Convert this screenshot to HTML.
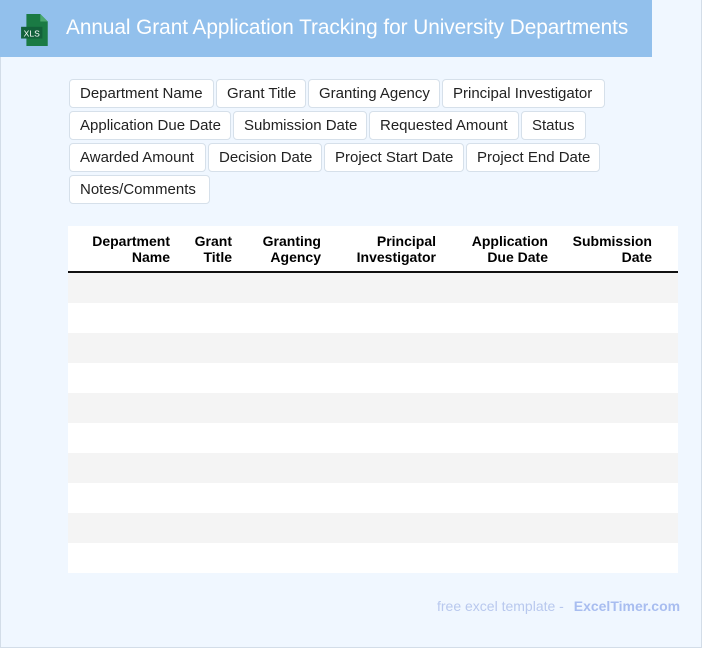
<!DOCTYPE html>
<html><head><style>
*{margin:0;padding:0;box-sizing:border-box}
body{width:702px;height:648px;background:#f0f7ff;font-family:"Liberation Sans",sans-serif;position:relative;overflow:hidden}
.frame{position:absolute;left:0;top:0;width:702px;height:648px;border:1px solid #d3dde8;border-top:none}
.hdr{position:absolute;left:0;top:0;width:652px;height:57px;background:#92c0ec}
.hdr h1{position:absolute;left:66px;top:16px;font-size:20.8px;letter-spacing:-0.05px;font-weight:normal;color:#fff;white-space:nowrap}
.tag{position:absolute;height:29px;background:#fff;border:1px solid #d6e0ea;border-radius:4px;font-size:15px;line-height:28px;padding-left:10px;color:#222;white-space:nowrap}
.tbl{position:absolute;left:68px;top:226px;width:610px;height:347px;background:#fff}
.th{position:absolute;top:7px;font-size:14px;font-weight:bold;text-align:right;line-height:16px;color:#000;white-space:nowrap}
.line{position:absolute;left:0;top:45px;width:610px;height:2px;background:#111}
.row{position:absolute;left:0;width:610px;height:30px;background:#f4f4f4}
.ft{position:absolute;top:598px;left:437px;font-size:14px;color:#b8c8ee;white-space:nowrap}
.ft b{color:#a8bdf0;margin-left:6px}
</style></head><body>
<div class="frame"></div>
<div class="hdr">
<svg style="position:absolute;left:20px;top:14px" width="32" height="32" viewBox="0 0 30 30">
<path d="M6 0h13l7 7v23H6z" fill="#1a7a44"/><path d="M19 0v7h7z" fill="#4aa86e"/>
<rect x="1" y="12" width="20" height="11" fill="#12613a"/>
<text x="11" y="21" font-size="8" fill="#fff" text-anchor="middle" font-family="Liberation Sans">XLS</text></svg>
<h1>Annual Grant Application Tracking for University Departments</h1></div>

<div class="tag" style="left:69px;top:79px;width:145px">Department Name</div>
<div class="tag" style="left:216px;top:79px;width:90px">Grant Title</div>
<div class="tag" style="left:308px;top:79px;width:132px">Granting Agency</div>
<div class="tag" style="left:442px;top:79px;width:163px">Principal Investigator</div>
<div class="tag" style="left:69px;top:111px;width:162px">Application Due Date</div>
<div class="tag" style="left:233px;top:111px;width:134px">Submission Date</div>
<div class="tag" style="left:369px;top:111px;width:150px">Requested Amount</div>
<div class="tag" style="left:521px;top:111px;width:65px">Status</div>
<div class="tag" style="left:69px;top:143px;width:137px">Awarded Amount</div>
<div class="tag" style="left:208px;top:143px;width:114px">Decision Date</div>
<div class="tag" style="left:324px;top:143px;width:140px">Project Start Date</div>
<div class="tag" style="left:466px;top:143px;width:134px">Project End Date</div>
<div class="tag" style="left:69px;top:175px;width:141px">Notes/Comments</div>

<div class="tbl">
<div class="th" style="right:508px">Department<br>Name</div>
<div class="th" style="right:446px">Grant<br>Title</div>
<div class="th" style="right:357px">Granting<br>Agency</div>
<div class="th" style="right:242px">Principal<br>Investigator</div>
<div class="th" style="right:130px">Application<br>Due Date</div>
<div class="th" style="right:26px">Submission<br>Date</div>
<div class="line"></div>
<div class="row" style="top:47px"></div>
<div class="row" style="top:107px"></div>
<div class="row" style="top:167px"></div>
<div class="row" style="top:227px"></div>
<div class="row" style="top:287px"></div>
</div>
<div class="ft">free excel template - <b>ExcelTimer.com</b></div>
</body></html>
